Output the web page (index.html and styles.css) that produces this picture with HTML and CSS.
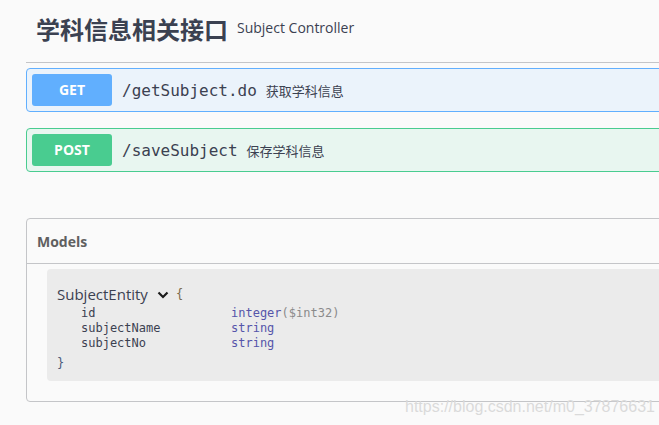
FILE: index.html
```html
<!DOCTYPE html>
<html lang="zh">
<head>
<meta charset="utf-8">
<title>Subject Controller</title>
<link rel="stylesheet" href="styles.css">
</head>
<body>
<div class="page">
  <div class="tag-header">
    <h3 class="tag-title">学科信息相关接口</h3>
    <span class="tag-desc">Subject Controller</span>
  </div>

  <div class="opblock opblock-get">
    <span class="method">GET</span>
    <span class="path">/getSubject.do</span>
    <span class="summary">获取学科信息</span>
  </div>

  <div class="opblock opblock-post">
    <span class="method">POST</span>
    <span class="path">/saveSubject</span>
    <span class="summary">保存学科信息</span>
  </div>

  <section class="models">
    <h4 class="models-title">Models</h4>
    <div class="models-body">
      <div class="model-box">
        <div class="model-head">
          <span class="model-name">SubjectEntity</span>
          <svg class="chevron" width="12" height="8" viewBox="0 0 12 8"><path d="M1.5 1.5 L6 6 L10.5 1.5" fill="none" stroke="#1b1b1b" stroke-width="2.2"/></svg>
          <span class="brace">{</span>
        </div>
        <div class="props">
          <span class="prop-name">id</span><span class="prop-type">integer<span class="prop-format">($int32)</span></span>
          <span class="prop-name">subjectName</span><span class="prop-type">string</span>
          <span class="prop-name">subjectNo</span><span class="prop-type">string</span>
        </div>
        <div class="brace brace-close">}</div>
      </div>
    </div>
  </section>
</div>
<div class="watermark">https://blog.csdn.net/m0_37876631</div>
</body>
</html>
```

FILE: styles.css
```css
html, body {
  margin: 0;
  padding: 0;
  background: #fafafa;
  overflow: hidden;
  width: 659px;
  height: 425px;
}
body {
  position: relative;
  color: #3b4151;
  font-family: "Open Sans", "Noto Sans CJK SC", sans-serif;
}
.page {
  margin-left: 26px;
  width: 900px;
}
.tag-header {
  display: flex;
  align-items: center;
  height: 63px;
  box-sizing: border-box;
  padding: 0 0 5px 10px;
  border-bottom: 1px solid #c4c5c8;
}
.tag-title {
  margin: 0;
  font-family: "Noto Sans CJK SC", sans-serif;
  font-size: 24px;
  font-weight: 700;
  line-height: 28px;
  color: #3b4151;
}
.tag-desc {
  margin-left: 9px;
  margin-top: -2px;
  font-size: 14px;
  color: #3b4151;
}
.opblock {
  display: flex;
  align-items: center;
  height: 44px;
  box-sizing: border-box;
  padding: 5px;
  border: 1px solid;
  border-radius: 4px;
  margin-top: 5px;
}
.opblock-get {
  background: #ebf3fb;
  border-color: #61affe;
}
.opblock-post {
  background: #e8f6f0;
  border-color: #49cc90;
  margin-top: 16px;
}
.method {
  width: 80px;
  height: 32px;
  line-height: 32px;
  text-align: center;
  border-radius: 3px;
  color: #fff;
  font-family: "Open Sans", sans-serif;
  font-weight: 700;
  font-size: 14px;
}
.opblock-get .method { background: #61affe; }
.opblock-post .method { background: #49cc90; }
.path {
  margin-left: 10px;
  font-family: "DejaVu Sans Mono", monospace;
  font-size: 16px;
  color: #3b4151;
}
.summary {
  margin-left: 9px;
  font-family: "Noto Sans CJK SC", sans-serif;
  font-size: 13px;
  color: #3b4151;
}
.models {
  margin-top: 46px;
  border: 1px solid #c4c5c8;
  border-radius: 4px;
}
.models-title {
  margin: 0;
  height: 45px;
  box-sizing: border-box;
  padding: 13px 0 0 10px;
  border-bottom: 1px solid #c4c5c8;
  font-family: "Open Sans", sans-serif;
  font-size: 14px;
  font-weight: 700;
  color: #606060;
}
.models-body {
  padding: 5px 0 20px 20px;
}
.model-box {
  background: #ebebeb;
  border-radius: 4px;
  height: 112px;
  box-sizing: border-box;
  padding: 15px 10px 0 10px;
}
.model-head {
  display: flex;
  align-items: center;
  height: 20px;
}
.model-name {
  font-family: "Open Sans", sans-serif;
  font-size: 15px;
  color: #3b4151;
}
.chevron {
  margin-left: 9px;
  margin-top: 1px;
}
.brace {
  font-family: "DejaVu Sans Mono", monospace;
  font-size: 12px;
  color: #3b4151;
}
.model-head .brace {
  margin-left: 7px;
  color: #7a6a4e;
}
.props {
  display: grid;
  grid-template-columns: 150px auto;
  padding-left: 24px;
  margin-top: 2px;
  font-family: "DejaVu Sans Mono", monospace;
  font-size: 12px;
  line-height: 15px;
}
.prop-name {
  color: #3b4151;
}
.prop-type {
  color: #55a;
}
.prop-format {
  color: #8a8a8a;
}
.brace-close {
  margin-top: 5px;
  line-height: 15px;
  color: #4a5a7a;
}
.watermark {
  position: absolute;
  left: 405px;
  top: 398px;
  font-family: "Liberation Sans", Arial, sans-serif;
  font-size: 16px;
  color: #dadada;
  white-space: nowrap;
}
```
